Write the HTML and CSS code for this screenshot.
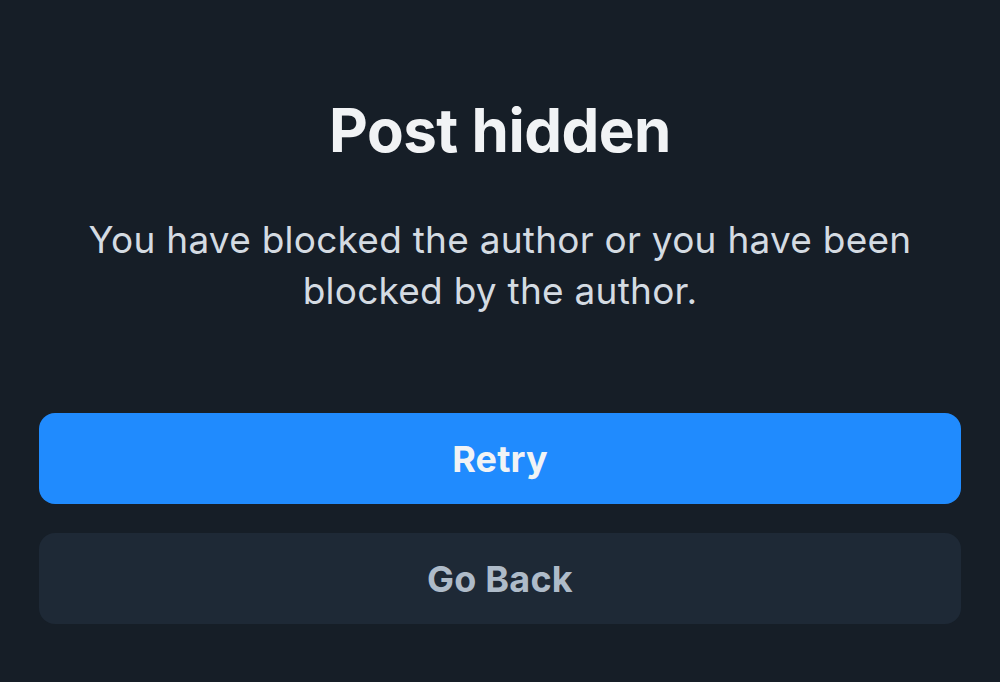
FILE: index.html
```html
<!DOCTYPE html>
<html lang="en">
<head>
<meta charset="utf-8">
<link rel="stylesheet" href="styles.css">
</head>
<body>
<main class="screen">
  <section class="message">
    <h1 class="title">Post hidden</h1>
    <p class="desc">You have blocked the author or you have been blocked by the author.</p>
  </section>
  <div class="actions">
    <button class="btn btn-primary">Retry</button>
    <button class="btn btn-secondary">Go Back</button>
  </div>
</main>
</body>
</html>
```

FILE: styles.css
```css
html, body {
  margin: 0;
  padding: 0;
  background: #161e27;
  height: 100%;
}
.screen {
  font-family: Inter, "Noto Sans", sans-serif;
  padding: 96px 39px 0 39px;
  display: flex;
  flex-direction: column;
}
.message {
  display: flex;
  flex-direction: column;
  align-items: center;
  text-align: center;
}
.title {
  margin: 0;
  font-size: 60px;
  font-weight: 700;
  line-height: 68px;
  color: #f1f3f5;
  letter-spacing: -0.5px;
}
.desc {
  margin: 50px 20px 0;
  font-size: 37px;
  letter-spacing: 0.25px;
  line-height: 51px;
  color: #d4dbe2;
  font-weight: 400;
}
.actions {
  margin-top: 97px;
  display: flex;
  flex-direction: column;
  gap: 29px;
}
.btn {
  height: 91px;
  border: none;
  border-radius: 16px;
  font-family: Inter, "Noto Sans", sans-serif;
  font-size: 36px;
  letter-spacing: 0.2px;
  font-weight: 700;
  cursor: pointer;
}
.btn-primary {
  background: #208bfe;
  color: #f1f3f5;
}
.btn-secondary {
  background: #1e2936;
  color: #aebbc9;
}
```
